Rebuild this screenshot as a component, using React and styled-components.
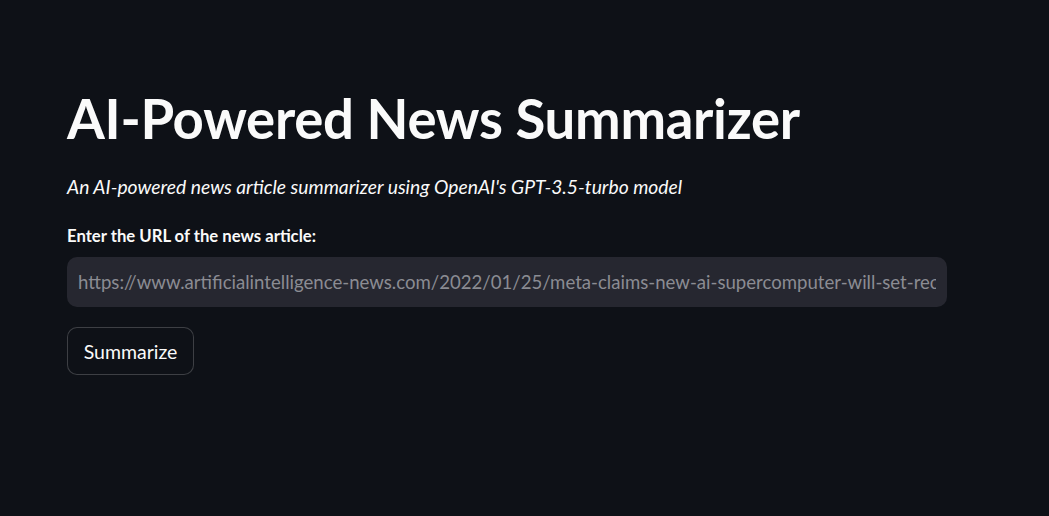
import React from "react";
import styled, { createGlobalStyle } from "styled-components";

const Global = createGlobalStyle`
  html, body { margin: 0; padding: 0; background: #0e1117; }
  body { font-family: "Lato", "Noto Sans", sans-serif; color: #fafafa; }
  * { box-sizing: border-box; }
`;

const Page = styled.main`
  min-height: 516px;
  background: #0e1117;
  padding: 84px 0 0 67px;
`;

const Block = styled.div`
  width: 880px;
  display: flex;
  flex-direction: column;
`;

const Title = styled.h1`
  margin: 0;
  font-family: "Lato", sans-serif;
  font-weight: 700;
  font-size: 54.5px;
  line-height: 68px;
  letter-spacing: -0.3px;
  color: #fafafa;
`;

const Subtitle = styled.p`
  margin: 21px 0 0;
  font-style: italic;
  font-size: 19.3px;
  line-height: 28px;
  color: #fafafa;
`;

const Label = styled.label`
  margin-top: 23px;
  font-weight: 700;
  font-size: 16.7px;
  line-height: 24px;
  color: #fafafa;
`;

const Input = styled.input`
  margin-top: 9px;
  width: 880px;
  height: 50px;
  border: none;
  outline: none;
  border-radius: 10px;
  background: #262730;
  padding: 0 11px;
  font-family: "Lato", sans-serif;
  font-size: 18.6px;
  color: #8b8c93;
`;

const Button = styled.button`
  margin-top: 20px;
  align-self: flex-start;
  width: 127px;
  height: 48px;
  border: 1px solid rgba(250, 250, 250, 0.2);
  border-radius: 10px;
  background: #0e1117;
  color: #fafafa;
  font-family: "Lato", sans-serif;
  font-size: 19.5px;
  cursor: pointer;
`;

export default function App() {
  return (
    <>
      <Global />
      <Page>
        <Block>
          <Title>AI-Powered News Summarizer</Title>
          <Subtitle>An AI-powered news article summarizer using OpenAI's GPT-3.5-turbo model</Subtitle>
          <Label htmlFor="url">Enter the URL of the news article:</Label>
          <Input
            id="url"
            readOnly
            value="https://www.artificialintelligence-news.com/2022/01/25/meta-claims-new-ai-supercomputer-will-set-records/"
          />
          <Button>Summarize</Button>
        </Block>
      </Page>
    </>
  );
}
